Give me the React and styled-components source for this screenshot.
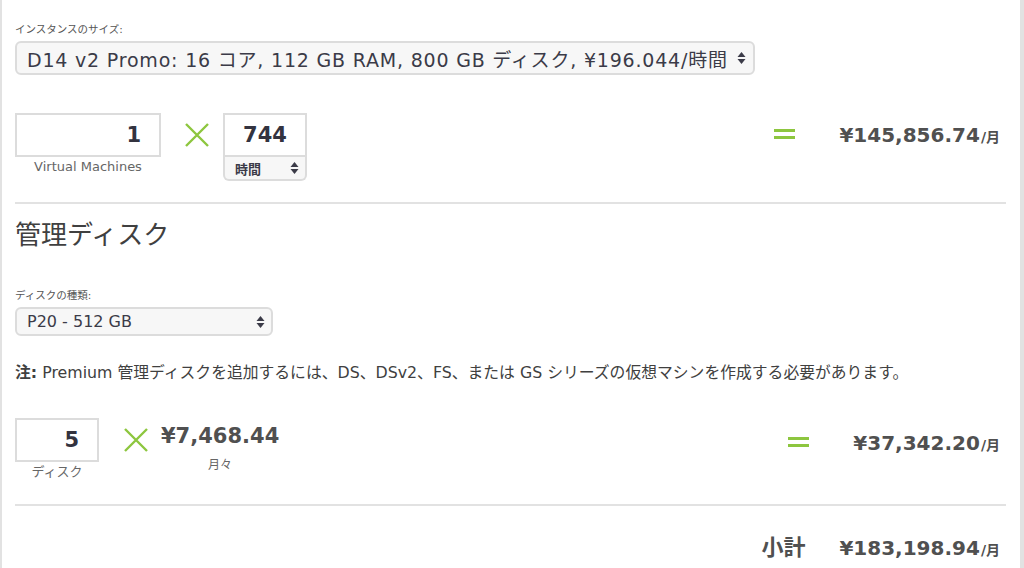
import React from "react";
import styled, { createGlobalStyle } from "styled-components";

const GlobalStyle = createGlobalStyle`
  html, body {
    margin: 0;
    padding: 0;
    background: #fff;
  }
  body {
    font-family: "DejaVu Sans", "Noto Sans CJK JP", sans-serif;
    color: #404040;
  }
`;

const green = "#8dc63f";

const Panel = styled.div`
  box-sizing: border-box;
  width: 1024px;
  min-height: 568px;
  border-left: 2px solid #e2e2e2;
  border-right: 4px solid #e2e2e2;
  padding: 22px 14px 0 13px;
`;

const FieldLabel = styled.div`
  font-size: 10.5px;
  color: #555;
  line-height: 14px;
  margin-top: ${(p) => p.top || 0}px;
  margin-bottom: 5px;
`;

const SelectBox = styled.div`
  box-sizing: border-box;
  display: flex;
  align-items: center;
  justify-content: space-between;
  width: ${(p) => p.width}px;
  height: ${(p) => p.height}px;
  font-size: ${(p) => p.size}px;
  letter-spacing: ${(p) => p.spacing || 0}px;
  color: #3b3b48;
  background: #f7f7f7;
  border: 2px solid #dcdcdc;
  border-radius: 6px;
  padding: 0 ${(p) => p.padRight}px 0 ${(p) => p.pad}px;
  white-space: nowrap;
  cursor: pointer;
`;

const UnitSelect = styled(SelectBox)`
  border-top: none;
  border-radius: 0 0 6px 6px;
  font-weight: 600;
`;

const UpDown = () => (
  <svg width="9" height="14" viewBox="0 0 9 14">
    <path d="M4.5 1 L8.5 6 L0.5 6 Z" fill="#3b3b48" />
    <path d="M4.5 13 L8.5 8 L0.5 8 Z" fill="#3b3b48" />
  </svg>
);

const CalcRow = styled.div`
  display: flex;
  align-items: flex-start;
  margin-top: ${(p) => p.top}px;
`;

const Group = styled.div`
  display: flex;
  flex-direction: column;
  align-items: center;
`;

const NumInput = styled.input`
  box-sizing: border-box;
  width: ${(p) => p.width}px;
  height: 44px;
  border: 2px solid #dcdcdc;
  border-radius: 0;
  font-family: "DejaVu Sans", "Noto Sans CJK JP", sans-serif;
  font-size: 21px;
  font-weight: 600;
  color: #33333f;
  text-align: ${(p) => p.align || "right"};
  padding: 0 ${(p) => p.padRight || 18}px 0 8px;
  outline: none;
`;

const Caption = styled.div`
  font-size: 13px;
  color: #666;
  margin-top: 1px;
  line-height: 18px;
`;

const Times = styled.svg`
  margin: ${(p) => p.margin};
  flex: none;
`;

const Cross = ({ margin }) => (
  <Times margin={margin} width="24" height="24" viewBox="0 0 24 24">
    <path d="M1 1 L23 23 M23 1 L1 23" stroke={green} strokeWidth="2.4" />
  </Times>
);

const Equals = styled.div`
  width: 21px;
  height: 4px;
  border-top: 3px solid ${green};
  border-bottom: 3px solid ${green};
  margin-left: auto;
  margin-top: ${(p) => p.top}px;
  flex: none;
`;

const Total = styled.div`
  margin-left: ${(p) => p.gap}px;
  padding-right: 6px;
  font-size: 20px;
  font-weight: 700;
  color: #505050;
  line-height: 28px;
  margin-top: ${(p) => p.top}px;
  white-space: nowrap;
`;

const Unit = styled.span`
  font-size: 14px;
  margin-left: 1px;
`;

const Divider = styled.hr`
  border: none;
  border-top: 2px solid #e2e2e2;
  margin: ${(p) => p.top}px 0 0;
`;

const Heading = styled.h2`
  margin: 14px 0 0;
  font-size: 26px;
  font-weight: 400;
  color: #404040;
  line-height: 34px;
`;

const Note = styled.p`
  margin: 26px 0 0;
  font-size: 15.8px;
  color: #404040;
  line-height: 22px;
  white-space: nowrap;
  strong {
    font-weight: 700;
  }
`;

const Price = styled.div`
  display: flex;
  flex-direction: column;
  align-items: center;
  margin-top: 2px;
  .value {
    font-size: 21px;
    font-weight: 700;
    color: #505050;
    line-height: 32px;
  }
  .per {
    font-size: 12px;
    color: #666;
    line-height: 14px;
    margin-top: 6px;
  }
`;

const SubtotalRow = styled.div`
  display: flex;
  justify-content: flex-end;
  align-items: baseline;
  margin-top: 28px;
  padding-right: 6px;
  font-size: 20px;
  font-weight: 700;
  color: #505050;
  line-height: 28px;
  .label {
    font-size: 22px;
    margin-right: 34px;
  }
`;

export default function App() {
  return (
    <>
      <GlobalStyle />
      <Panel>
        <FieldLabel>インスタンスのサイズ:</FieldLabel>
        <SelectBox width={740} height={34} size={19} spacing={0.8} pad={10} padRight={7}>
          <span>
            D14 v2 Promo: 16 コア, 112 GB RAM, 800 GB ディスク, ¥196.044/時間
          </span>
          <UpDown />
        </SelectBox>

        <CalcRow top={38}>
          <Group>
            <NumInput width={146} defaultValue="1" />
            <Caption>Virtual Machines</Caption>
          </Group>
          <Cross margin="10px 14px 0 24px" />
          <Group>
            <NumInput width={84} defaultValue="744" align="center" padRight={8} />
            <UnitSelect width={84} height={24} size={13} pad={10} padRight={6}>
              <span>時間</span>
              <UpDown />
            </UnitSelect>
          </Group>
          <Equals top={16} />
          <Total gap={44} top={8}>
            ¥145,856.74<Unit>/月</Unit>
          </Total>
        </CalcRow>

        <Divider top={21} />

        <Heading>管理ディスク</Heading>

        <FieldLabel top={36}>ディスクの種類:</FieldLabel>
        <SelectBox width={258} height={29} size={16} pad={10} padRight={6}>
          <span>P20 - 512 GB</span>
          <UpDown />
        </SelectBox>

        <Note>
          <strong>注:</strong> Premium
          管理ディスクを追加するには、DS、DSv2、FS、または GS
          シリーズの仮想マシンを作成する必要があります。
        </Note>

        <CalcRow top={34}>
          <Group>
            <NumInput width={84} defaultValue="5" />
            <Caption>ディスク</Caption>
          </Group>
          <Cross margin="10px 13px 0 25px" />
          <Price>
            <span className="value">¥7,468.44</span>
            <span className="per">月々</span>
          </Price>
          <Equals top={19} />
          <Total gap={44} top={11}>
            ¥37,342.20<Unit>/月</Unit>
          </Total>
        </CalcRow>

        <Divider top={23} />

        <SubtotalRow>
          <span className="label">小計</span>
          <span>
            ¥183,198.94<Unit>/月</Unit>
          </span>
        </SubtotalRow>
      </Panel>
    </>
  );
}
